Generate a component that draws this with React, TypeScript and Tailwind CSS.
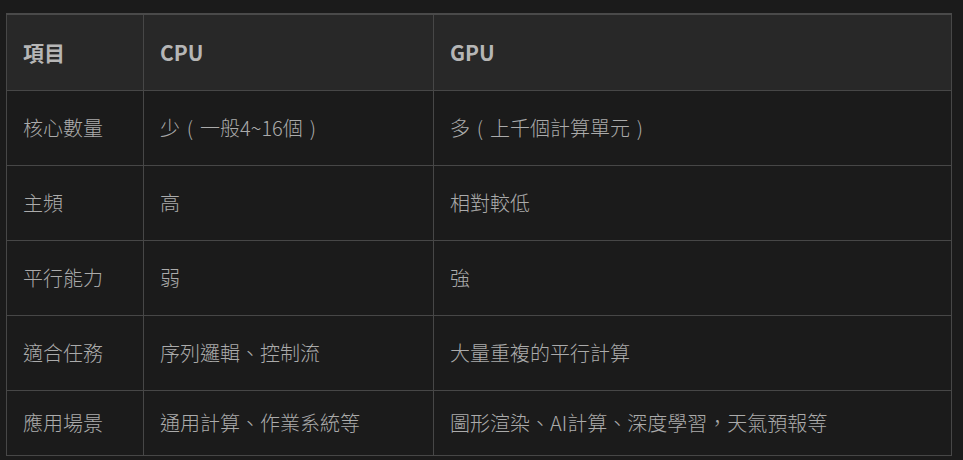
import type { ReactNode } from 'react'

const rows: [string, string, string][] = [
  ['核心數量', '少（一般4~16個）', '多（上千個計算單元）'],
  ['主頻', '高', '相對較低'],
  ['平行能力', '弱', '強'],
  ['適合任務', '序列邏輯、控制流', '大量重複的平行計算'],
  ['應用場景', '通用計算、作業系統等', '圖形渲染、AI計算、深度學習，天氣預報等'],
]

// full-width brackets are drawn centred in their cell, as in the reference font
function cellText(s: string): ReactNode {
  return s.split(/([（）])/).map((part, k) =>
    part === '（' || part === '）' ? (
      <span key={k} className="inline-block w-[1em] text-center">
        {part === '（' ? '(' : ')'}
      </span>
    ) : (
      part
    ),
  )
}

export default function App() {
  return (
    <div
      className="h-[460px] w-[963px] overflow-hidden bg-[#1b1b1b] pl-[6px] pt-[13px]"
      style={{ fontFamily: '"Microsoft JhengHei", "Noto Sans CJK TC", "Noto Sans", sans-serif' }}
    >
      <table className="w-[946px] table-fixed border-collapse border-t-2 border-[#4a4a4a] text-[20px]">
        <colgroup>
          <col className="w-[137px]" />
          <col className="w-[290px]" />
          <col />
        </colgroup>
        <thead>
          <tr className="h-[76px] bg-[#282828] text-[21px]">
            <th className="border border-[#474747] px-4 text-left font-semibold text-[#b6b6b6]">項目</th>
            <th className="border border-[#474747] px-4 text-left font-semibold text-[#b6b6b6]">CPU</th>
            <th className="border border-[#474747] px-4 text-left font-semibold text-[#b6b6b6]">GPU</th>
          </tr>
        </thead>
        <tbody>
          {rows.map((r, i) => (
            <tr key={r[0]} className={i === rows.length - 1 ? 'h-[65px]' : 'h-[75px]'}>
              {r.map((c, j) => (
                <td key={j} className="border border-[#474747] px-4 font-light text-[#ababab]">
                  {cellText(c)}
                </td>
              ))}
            </tr>
          ))}
        </tbody>
      </table>
    </div>
  )
}
